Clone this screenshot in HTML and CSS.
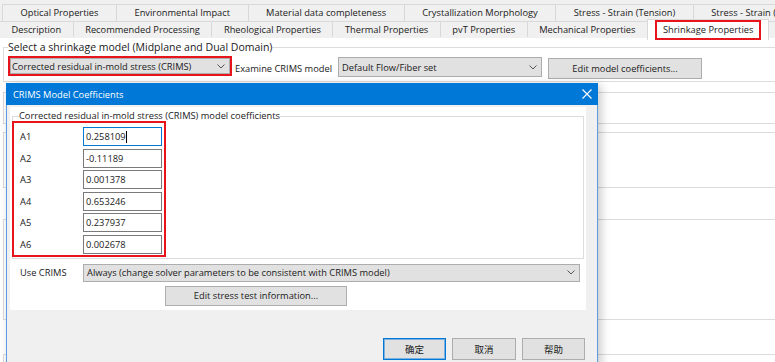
FILE: index.html
```html
<!DOCTYPE html>
<html lang="en">
<head>
    <meta charset="UTF-8">
    <title>Shrinkage Properties</title>
    <link rel="stylesheet" href="styles.css">
</head>
<body>

    <div class="tabs">
        <div class="tab-row row-back">
            <div class="tab">Optical Properties</div>
            <div class="tab">Environmental Impact</div>
            <div class="tab">Material data completeness</div>
            <div class="tab">Crystallization Morphology</div>
            <div class="tab">Stress - Strain (Tension)</div>
            <div class="tab">Stress - Strain (Compression)</div>
        </div>
        <div class="tab-row row-front">
            <div class="tab">Description</div>
            <div class="tab">Recommended Processing</div>
            <div class="tab">Rheological Properties</div>
            <div class="tab">Thermal Properties</div>
            <div class="tab">pvT Properties</div>
            <div class="tab">Mechanical Properties</div>
            <div class="tab active"><span class="mark">Shrinkage Properties</span></div>
            <div class="tab">Fillers</div>
        </div>
    </div>

    <div class="page">
        <fieldset class="group model-group">
            <legend>Select a shrinkage model (Midplane and Dual Domain)</legend>
            <div class="model-row">
                <div class="mark-box">
                    <div class="combo model-combo">
                        <span>Corrected residual in-mold stress (CRIMS)</span>
                        <svg class="chev" width="8" height="5" viewBox="0 0 8 5"><polyline points="0.5,0.5 4,4 7.5,0.5"/></svg>
                    </div>
                </div>
                <span class="examine">Examine CRIMS model</span>
                <div class="combo flow-combo">
                    <span>Default Flow/Fiber set</span>
                    <svg class="chev" width="8" height="5" viewBox="0 0 8 5"><polyline points="0.5,0.5 4,4 7.5,0.5"/></svg>
                </div>
                <div class="btn coeff-btn">Edit model coefficients...</div>
            </div>
        </fieldset>
        <div class="panel p1"></div>
        <div class="panel p2"></div>
        <div class="panel p3"></div>
        <div class="panel p4"></div>
    </div>

    <!-- modal sits over the property page -->
    <div class="dialog">
        <div class="dlg-title">
            <span>CRIMS Model Coefficients</span>
            <svg class="close" width="10" height="10" viewBox="0 0 10 10"><path d="M0.5 0.5 L9.5 9.5 M9.5 0.5 L0.5 9.5"/></svg>
        </div>
        <div class="dlg-panel">
            <fieldset class="group coef-group">
                <legend>Corrected residual in-mold stress (CRIMS) model coefficients</legend>
                <div class="mark-box coef-box">
                    <div class="coef-row"><span class="lbl">A1</span><div class="field focused">0.258109<span class="caret"></span></div></div>
                    <div class="coef-row"><span class="lbl">A2</span><div class="field">-0.11189</div></div>
                    <div class="coef-row"><span class="lbl">A3</span><div class="field">0.001378</div></div>
                    <div class="coef-row"><span class="lbl">A4</span><div class="field">0.653246</div></div>
                    <div class="coef-row"><span class="lbl">A5</span><div class="field">0.237937</div></div>
                    <div class="coef-row"><span class="lbl">A6</span><div class="field">0.002678</div></div>
                </div>
            </fieldset>
            <div class="use-row">
                <span class="lbl">Use CRIMS</span>
                <div class="combo use-combo">
                    <span>Always (change solver parameters to be consistent with CRIMS model)</span>
                    <svg class="chev" width="8" height="5" viewBox="0 0 8 5"><polyline points="0.5,0.5 4,4 7.5,0.5"/></svg>
                </div>
            </div>
            <div class="btn stress-btn">Edit stress test information...</div>
        </div>
        <div class="dlg-footer">
            <div class="btn cjk default">确定</div>
            <div class="btn cjk wide">取消</div>
            <div class="btn cjk">帮助</div>
        </div>
    </div>

</body>
</html>
```

FILE: styles.css
```css
body{
    margin: 0;
    background-color: white;
    font-family: "Open Sans", "Noto Sans CJK SC", sans-serif;
    font-size: 9.3px;
    color: #1a1a1a;
    overflow: hidden;
    height: 362px;
    position: relative;
}

/* tab strip */
.tabs{
    background-color: #f0f0f0;
    height: 38px;
}
.tab-row{
    display: flex;
    white-space: nowrap;
}
.row-back{
    padding: 4px 0 0 3px;
    height: 17px;
}
.row-front{
    height: 16px;
}
.tab{
    border: 1px solid #d9d9d9;
    border-bottom: none;
    margin-left: -1px;
    padding: 0 17.5px;
    line-height: 16px;
    flex-shrink: 0;
}
.row-front .tab{
    padding: 0 11.5px;
    line-height: 15px;
}
.row-front .tab.active{
    background-color: white;
    margin-top: -2px;
    height: 20px;
    padding: 0 7px;
    position: relative;
}
.mark{
    display: inline-block;
    border: 2px solid #e8141c;
    padding: 0 6px;
    line-height: 15px;
    height: 16px;
}

/* page under the dialog */
.page{
    padding-left: 3px;
}
.group{
    border: 1px solid #dcdcdc;
    margin: 0;
    min-width: 0;
}
.group legend{
    padding: 0;
    line-height: 14px;
}
.model-group{
    margin: 2px -10px 0 0;
    padding: 2px 0 2px 4px;
}
.model-group legend{
    font-size: 10.5px;
}
.model-row{
    display: flex;
    align-items: flex-start;
}
.mark-box{
    border: 2px solid #e8141c;
}
.combo{
    background-color: #e1e1e1;
    border: 1px solid #adadad;
    display: flex;
    align-items: center;
    justify-content: space-between;
    box-sizing: border-box;
    white-space: nowrap;
}
.chev{
    fill: none;
    stroke: #555;
    stroke-width: 1;
    flex-shrink: 0;
}
.model-combo{
    width: 220px;
    height: 16px;
    padding: 0 4px 0 1px;
}
.examine{
    margin: 6px 0 0 3px;
    line-height: 14px;
}
.flow-combo{
    width: 204px;
    height: 20px;
    margin: 1px 0 0 6px;
    padding: 0 4px 0 3px;
}
.btn{
    background-color: #e1e1e1;
    border: 1px solid #adadad;
    box-sizing: border-box;
    text-align: center;
    white-space: nowrap;
}
.coeff-btn{
    width: 154px;
    height: 21px;
    line-height: 19px;
    margin: 2px 0 0 6px;
}
.panel{
    border: 1px solid #dcdcdc;
    margin-right: -10px;
    box-sizing: border-box;
}
.p1{ margin-top: 10px; height: 32px; }
.p2{ margin-top: 8px; height: 56px; }
.p3{ margin-top: 31px; height: 101px; }
.p4{ margin-top: 34px; height: 50px; }

/* CRIMS dialog */
.dialog{
    position: absolute;
    left: 6px;
    top: 83px;
    width: 592px;
    height: 300px;
    box-sizing: border-box;
    border: 1px solid #5b9de0;
    border-top: none;
    background-color: #f0f0f0;
    box-shadow: 3px 2px 9px rgba(0, 0, 0, 0.22);
}
.dlg-title{
    background-color: #0078d7;
    color: white;
    height: 22px;
    margin: 0 -1px;
    padding: 0 6px 0 7px;
    display: flex;
    align-items: center;
    justify-content: space-between;
    font-size: 9.3px;
}
.close{
    stroke: white;
    stroke-width: 1.1;
}
.dlg-panel{
    background-color: white;
    margin: 2px 11px 0 3px;
    padding: 3px 0 4px 0;
}
.coef-group{
    margin: 0 2px;
    padding: 0 0 1px 0;
}
.coef-group legend{
    margin-left: 6px;
    line-height: 12px;
}
.coef-box{
    width: 154px;
    box-sizing: border-box;
    margin: -1px 0 0 -1px;
    padding: 4px 2px 1px 6px;
    display: flex;
    flex-direction: column;
    gap: 2.6px;
}
.coef-row{
    display: flex;
    align-items: center;
}
.lbl{
    width: 63px;
    flex-shrink: 0;
}
.field{
    width: 79px;
    height: 19px;
    box-sizing: border-box;
    border: 1px solid #7a7a7a;
    padding-left: 2px;
    line-height: 17px;
    background-color: white;
    display: flex;
    align-items: center;
}
.field.focused{
    border-color: #0078d7;
}
.caret{
    width: 1px;
    height: 12px;
    background-color: black;
}
.use-row{
    display: flex;
    align-items: center;
    margin: 5px 0 0 10px;
}
.use-combo{
    width: 497px;
    height: 18px;
    padding: 0 4px 0 3px;
}
.stress-btn{
    width: 182px;
    height: 20px;
    line-height: 18px;
    margin: 4px 0 0 155px;
}
.dlg-footer{
    display: flex;
    justify-content: flex-end;
    gap: 6px;
    margin: 28px 12px 0 0;
}
.cjk{
    font-family: "Noto Sans CJK SC", sans-serif;
    width: 63px;
    height: 22px;
    line-height: 20px;
    font-size: 9.5px;
}
.cjk.wide{
    width: 64px;
}
.default{
    border-color: #0078d7;
    box-shadow: inset 0 0 0 1px rgba(0, 120, 215, 0.45);
}
```
